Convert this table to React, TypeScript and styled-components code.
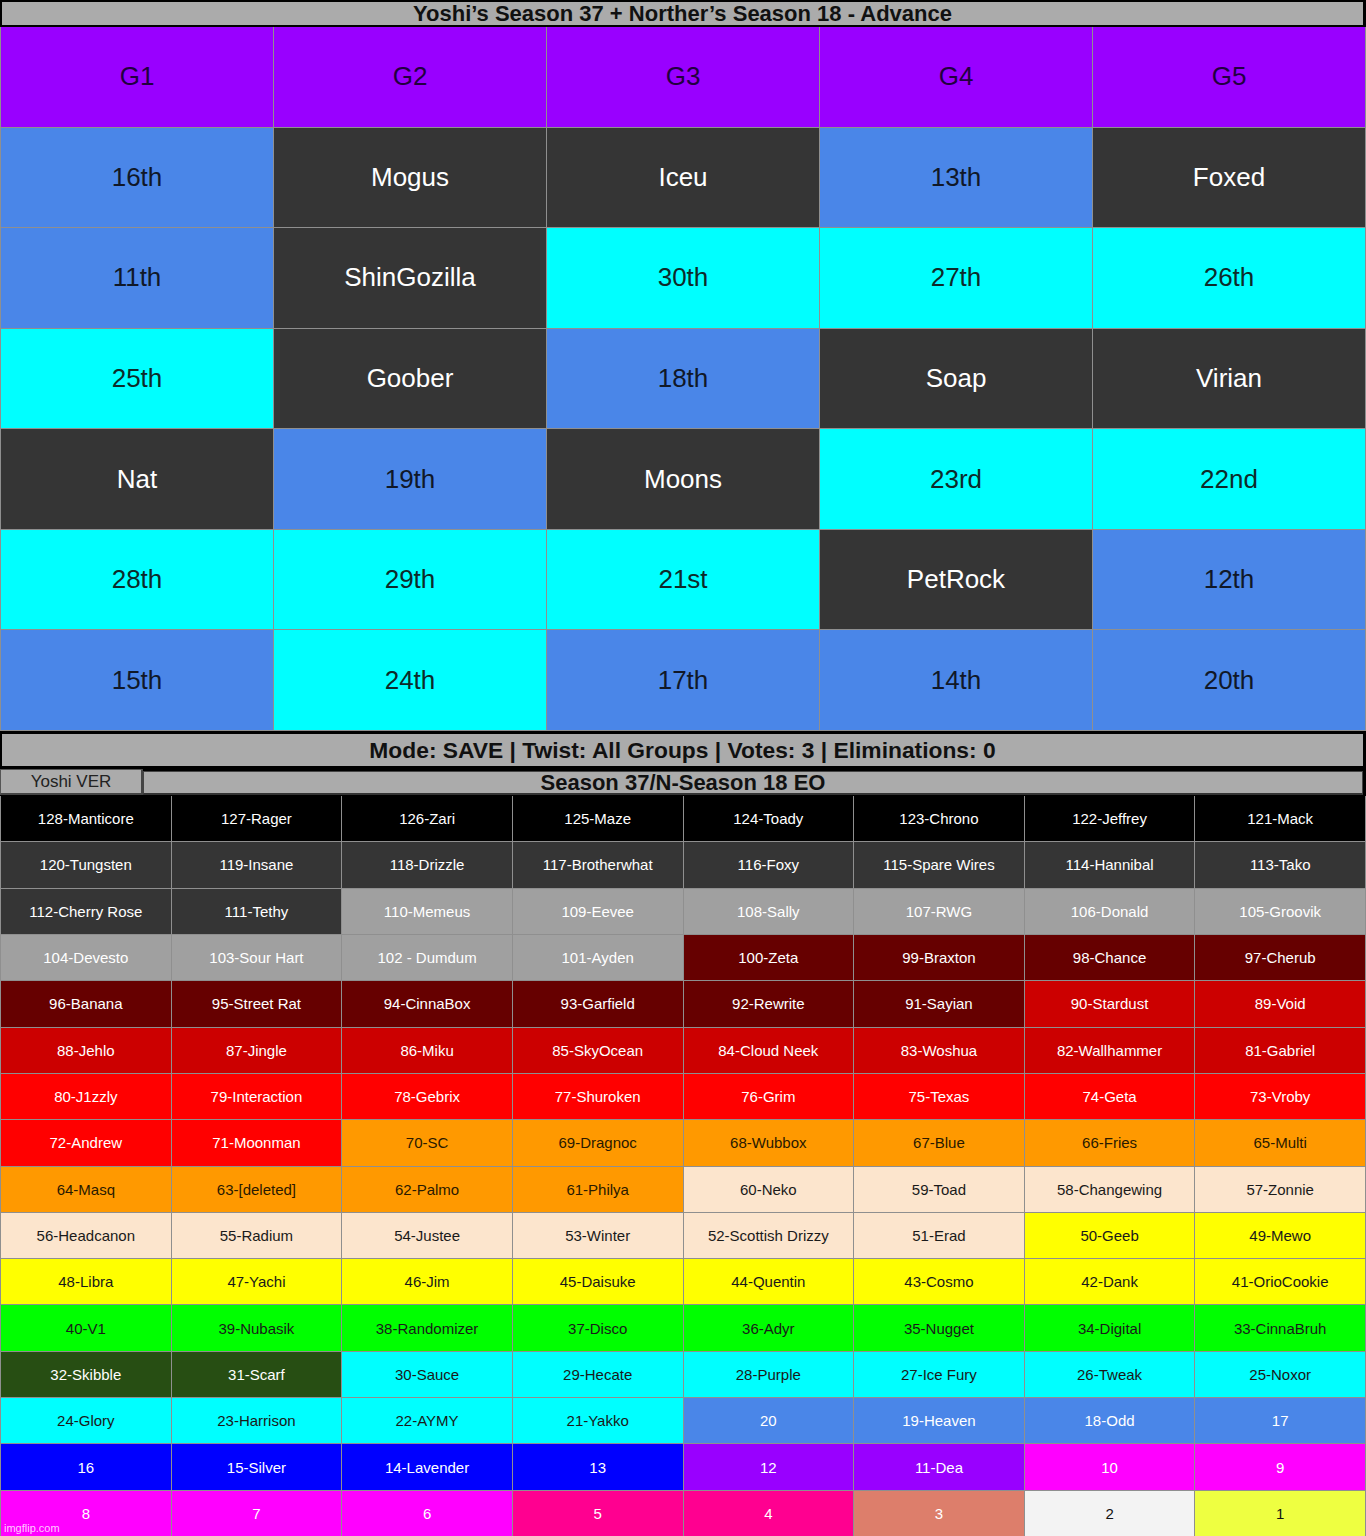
import React from "react";
import styled, { createGlobalStyle } from "styled-components";

const Global = createGlobalStyle`
  html, body { margin: 0; padding: 0; background: #000; }
  body { font-family: "Liberation Sans", Arial, sans-serif; }
`;

const Page = styled.div`
  position: relative;
  width: 1366px;
  background: #000;
`;

const TitleBar = styled.div`
  height: 27px;
  padding: 2px 3px 2px 2px;
  box-sizing: border-box;
  display: flex;
`;

const TitleInner = styled.div`
  flex: 1;
  min-height: 0;
  background: #ababab;
  display: flex;
  align-items: center;
  justify-content: center;
  font-weight: bold;
  font-size: 22px;
  color: #111;
  line-height: 23px;
  white-space: nowrap;
`;

const TopGrid = styled.div`
  display: grid;
  grid-template-columns: repeat(5, 1fr);
  grid-template-rows: repeat(7, 1fr);
  height: 703px;
  gap: 1px;
  background: #8f8f8f;
  border-left: 1px solid #8f8f8f;
  border-right: 1px solid #8f8f8f;
  border-bottom: 1px solid #8f8f8f;
`;

const topColors: Record<string, { bg: string; fg: string }> = {
  h: { bg: "#9900ff", fg: "#22003f" },
  b: { bg: "#4a86e8", fg: "#101828" },
  d: { bg: "#353535", fg: "#ffffff" },
  c: { bg: "#00ffff", fg: "#0e2a2a" },
};

const TopCell = styled.div<{ $k: string }>`
  background: ${(p) => topColors[p.$k].bg};
  color: ${(p) => topColors[p.$k].fg};
  display: flex;
  align-items: center;
  justify-content: center;
  font-size: 26px;
`;

const ModeBar = styled.div`
  height: 38px;
  padding: 3px 3px 3px 2px;
  box-sizing: border-box;
  display: flex;
`;

const ModeInner = styled.div`
  flex: 1;
  background: #ababab;
  display: flex;
  align-items: center;
  justify-content: center;
  font-weight: bold;
  font-size: 22.8px;
  color: #111;
  white-space: nowrap;
`;

const SeasonRow = styled.div`
  height: 27px;
  display: flex;
  align-items: stretch;
  padding-right: 3px;
  box-sizing: border-box;
`;

const VerTab = styled.div`
  width: 143px;
  box-sizing: border-box;
  background: #ababab;
  border: 1px solid #555;
  border-right: 2px solid #444;
  border-bottom: 2px solid #444;
  margin-bottom: 1px;
  display: flex;
  align-items: center;
  justify-content: center;
  font-size: 17px;
  color: #222;
`;

const SeasonTitle = styled.div`
  flex: 1;
  box-sizing: border-box;
  background: #ababab;
  border: 1px solid #444;
  border-bottom: 2px solid #333;
  margin-top: 2px;
  margin-bottom: 1px;
  padding-right: 140px;
  display: flex;
  align-items: center;
  justify-content: center;
  font-weight: bold;
  font-size: 22px;
  line-height: 22px;
  color: #111;
  white-space: nowrap;
`;

const BottomGrid = styled.div`
  display: grid;
  grid-template-columns: repeat(8, 1fr);
  grid-template-rows: repeat(16, 1fr);
  height: 741px;
  gap: 1px;
  background: #8f8f8f;
  border: 1px solid #8f8f8f;
  border-top: none;
  box-sizing: border-box;
`;

const BCell = styled.div<{ $bg: string; $fg: string }>`
  background: ${(p) => p.$bg};
  color: ${(p) => p.$fg};
  display: flex;
  align-items: center;
  justify-content: center;
  font-size: 15px;
  white-space: nowrap;
`;

const Watermark = styled.div`
  position: absolute;
  left: 4px;
  bottom: 3px;
  font-size: 11px;
  color: rgba(255, 255, 255, 0.8);
`;

const topRows: [string, string][][] = [
  [["G1", "h"], ["G2", "h"], ["G3", "h"], ["G4", "h"], ["G5", "h"]],
  [["16th", "b"], ["Mogus", "d"], ["Iceu", "d"], ["13th", "b"], ["Foxed", "d"]],
  [["11th", "b"], ["ShinGozilla", "d"], ["30th", "c"], ["27th", "c"], ["26th", "c"]],
  [["25th", "c"], ["Goober", "d"], ["18th", "b"], ["Soap", "d"], ["Virian", "d"]],
  [["Nat", "d"], ["19th", "b"], ["Moons", "d"], ["23rd", "c"], ["22nd", "c"]],
  [["28th", "c"], ["29th", "c"], ["21st", "c"], ["PetRock", "d"], ["12th", "b"]],
  [["15th", "b"], ["24th", "c"], ["17th", "b"], ["14th", "b"], ["20th", "b"]],
];

const names: string[] = [
  "128-Manticore", "127-Rager", "126-Zari", "125-Maze", "124-Toady", "123-Chrono", "122-Jeffrey", "121-Mack",
  "120-Tungsten", "119-Insane", "118-Drizzle", "117-Brotherwhat", "116-Foxy", "115-Spare Wires", "114-Hannibal", "113-Tako",
  "112-Cherry Rose", "111-Tethy", "110-Memeus", "109-Eevee", "108-Sally", "107-RWG", "106-Donald", "105-Groovik",
  "104-Devesto", "103-Sour Hart", "102 - Dumdum", "101-Ayden", "100-Zeta", "99-Braxton", "98-Chance", "97-Cherub",
  "96-Banana", "95-Street Rat", "94-CinnaBox", "93-Garfield", "92-Rewrite", "91-Sayian", "90-Stardust", "89-Void",
  "88-Jehlo", "87-Jingle", "86-Miku", "85-SkyOcean", "84-Cloud Neek", "83-Woshua", "82-Wallhammer", "81-Gabriel",
  "80-J1zzly", "79-Interaction", "78-Gebrix", "77-Shuroken", "76-Grim", "75-Texas", "74-Geta", "73-Vroby",
  "72-Andrew", "71-Moonman", "70-SC", "69-Dragnoc", "68-Wubbox", "67-Blue", "66-Fries", "65-Multi",
  "64-Masq", "63-[deleted]", "62-Palmo", "61-Philya", "60-Neko", "59-Toad", "58-Changewing", "57-Zonnie",
  "56-Headcanon", "55-Radium", "54-Justee", "53-Winter", "52-Scottish Drizzy", "51-Erad", "50-Geeb", "49-Mewo",
  "48-Libra", "47-Yachi", "46-Jim", "45-Daisuke", "44-Quentin", "43-Cosmo", "42-Dank", "41-OrioCookie",
  "40-V1", "39-Nubasik", "38-Randomizer", "37-Disco", "36-Adyr", "35-Nugget", "34-Digital", "33-CinnaBruh",
  "32-Skibble", "31-Scarf", "30-Sauce", "29-Hecate", "28-Purple", "27-Ice Fury", "26-Tweak", "25-Noxor",
  "24-Glory", "23-Harrison", "22-AYMY", "21-Yakko", "20", "19-Heaven", "18-Odd", "17",
  "16", "15-Silver", "14-Lavender", "13", "12", "11-Dea", "10", "9",
  "8", "7", "6", "5", "4", "3", "2", "1",
];

function colorFor(n: number): { bg: string; fg: string } {
  if (n >= 121) return { bg: "#000000", fg: "#ffffff" };
  if (n >= 111) return { bg: "#353535", fg: "#ffffff" };
  if (n >= 101) return { bg: "#a0a0a0", fg: "#ffffff" };
  if (n >= 91) return { bg: "#660000", fg: "#ffffff" };
  if (n >= 81) return { bg: "#cc0000", fg: "#ffffff" };
  if (n >= 71) return { bg: "#ff0000", fg: "#ffffff" };
  if (n >= 61) return { bg: "#ff9900", fg: "#2a1a00" };
  if (n >= 51) return { bg: "#fce5cd", fg: "#1a1a1a" };
  if (n >= 41) return { bg: "#ffff00", fg: "#1a1a1a" };
  if (n >= 33) return { bg: "#00ff00", fg: "#1a1a1a" };
  if (n >= 31) return { bg: "#274e13", fg: "#ffffff" };
  if (n >= 21) return { bg: "#00ffff", fg: "#1a1a1a" };
  if (n >= 17) return { bg: "#4a86e8", fg: "#ffffff" };
  if (n >= 13) return { bg: "#0000ff", fg: "#ffffff" };
  if (n >= 11) return { bg: "#9900ff", fg: "#ffffff" };
  if (n >= 6) return { bg: "#ff00ff", fg: "#ffffff" };
  if (n >= 4) return { bg: "#ff0090", fg: "#ffffff" };
  if (n === 3) return { bg: "#dd7e6b", fg: "#ffffff" };
  if (n === 2) return { bg: "#f3f3f3", fg: "#111111" };
  return { bg: "#eeff41", fg: "#111111" };
}

export default function App() {
  return (
    <Page>
      <Global />
      <TitleBar>
        <TitleInner>Yoshi’s Season 37 + Norther’s Season 18 - Advance</TitleInner>
      </TitleBar>
      <TopGrid>
        {topRows.flat().map(([t, k], i) => (
          <TopCell key={i} $k={k}>
            {t}
          </TopCell>
        ))}
      </TopGrid>
      <ModeBar>
        <ModeInner>Mode: SAVE | Twist: All Groups | Votes: 3 | Eliminations: 0</ModeInner>
      </ModeBar>
      <SeasonRow>
        <VerTab>Yoshi VER</VerTab>
        <SeasonTitle>Season 37/N-Season 18 EO</SeasonTitle>
      </SeasonRow>
      <BottomGrid>
        {names.map((name, i) => {
          const n = 128 - i;
          const c = colorFor(n);
          return (
            <BCell key={i} $bg={c.bg} $fg={c.fg}>
              {name}
            </BCell>
          );
        })}
      </BottomGrid>
      <Watermark>imgflip.com</Watermark>
    </Page>
  );
}
